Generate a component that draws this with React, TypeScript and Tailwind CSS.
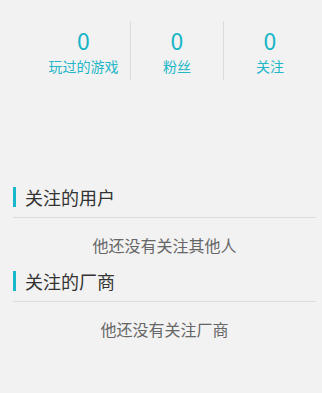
import React from 'react';

const stats = [
  { value: 0, label: '玩过的游戏' },
  { value: 0, label: '粉丝' },
  { value: 0, label: '关注' },
];

function Section({ title, empty }: { title: string; empty: string }) {
  return (
    <div className="ml-[13px] w-[303px]">
      <div className="flex h-[20px] items-center">
        <span className="h-[20px] w-[3px] bg-[#17b8c9]" />
        <span className="ml-[9px] text-[18px] leading-[20px] text-[#333]">{title}</span>
      </div>
      <div className="h-[11px] border-b border-[#dcdcdc]" />
      <div className="flex h-[53px] items-center justify-center text-[16px] text-[#666]">{empty}</div>
    </div>
  );
}

export default function App() {
  return (
    <div
      className="h-[393px] w-full overflow-hidden bg-[#f2f2f2]"
      style={{ fontFamily: '"Noto Sans CJK SC", "Noto Sans", sans-serif' }}
    >
      {/* Stats */}
      <div className="ml-[37px] flex pt-[21px]">
        {stats.map((s, i) => (
          <div
            key={s.label}
            className={`flex h-[59px] w-[93px] flex-col items-center pt-[6px] ${i > 0 ? 'border-l border-[#dcdcdc]' : ''}`}
          >
            <span className="text-[23px] leading-[26px] text-[#17b5c8]">{s.value}</span>
            <span className="mt-[4px] text-[14px] leading-[18px] text-[#22b6c8]">{s.label}</span>
          </div>
        ))}
      </div>

      <div className="mt-[107px]">
        <Section title="关注的用户" empty="他还没有关注其他人" />
        <Section title="关注的厂商" empty="他还没有关注厂商" />
      </div>
    </div>
  );
}
